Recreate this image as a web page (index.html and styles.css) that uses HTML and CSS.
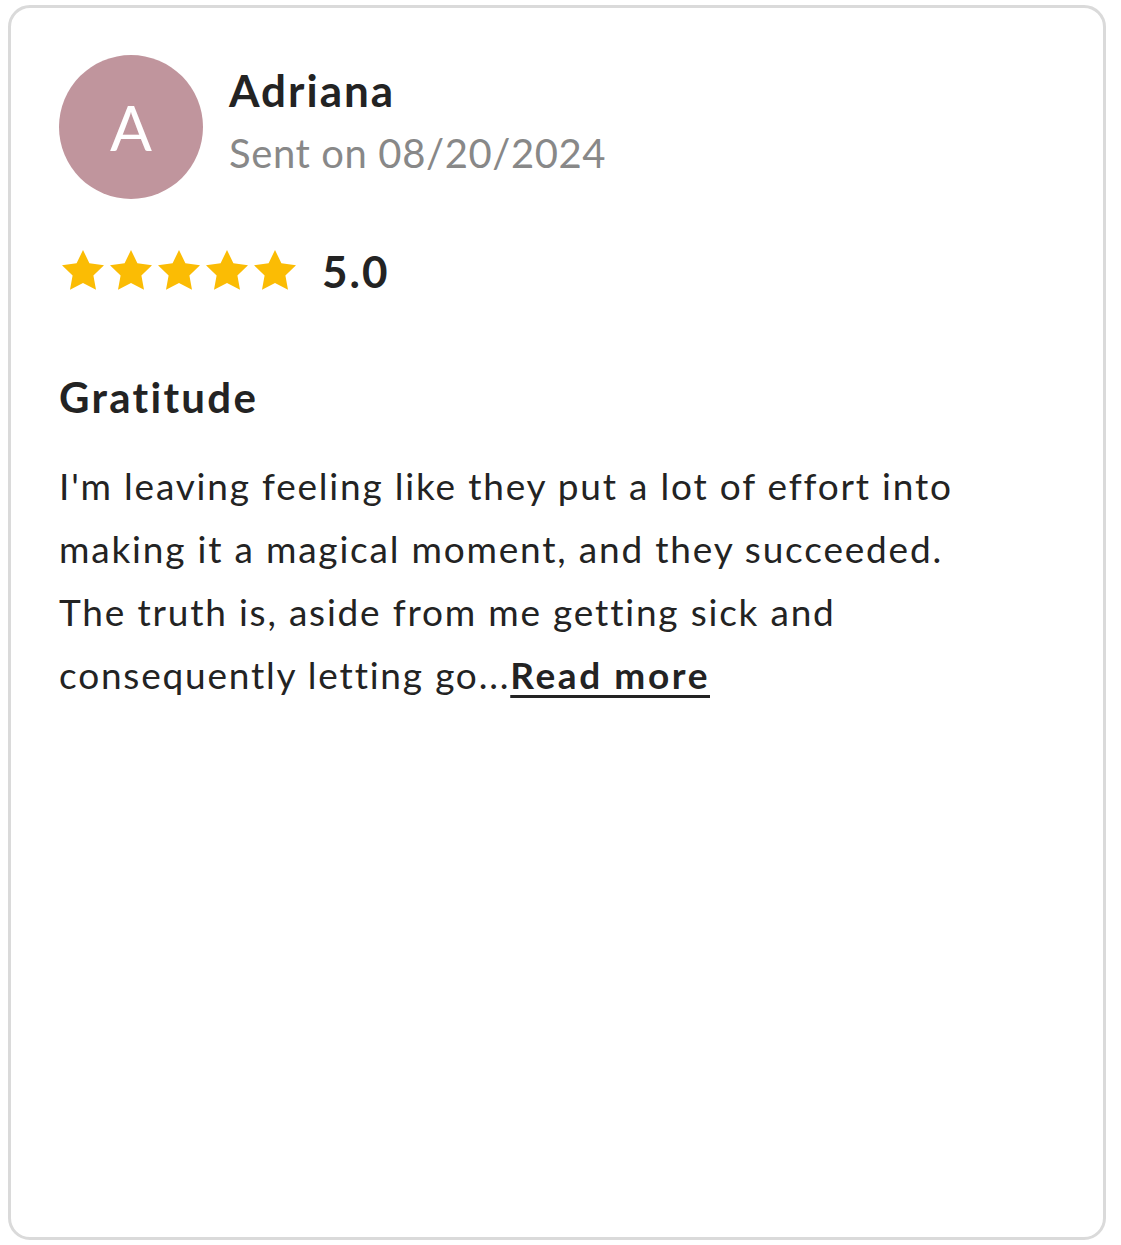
FILE: index.html
```html
<!DOCTYPE html>
<html lang="en">
<head>
    <meta charset="UTF-8">
    <title>Review</title>
    <link rel="stylesheet" href="styles.css">
</head>
<body>
<div class="review-card">
    <div class="review-header">
        <div class="avatar">A</div>
        <div class="author">
            <div class="author-name">Adriana</div>
            <div class="author-date">Sent on 08/20/2024</div>
        </div>
    </div>

    <div class="rating">
        <div class="stars">
            <svg viewBox="0 0 24 24"><path d="M12 1.5l3.2 6.6 7.3 1-5.3 5.1 1.3 7.2L12 18l-6.5 3.4 1.3-7.2L1.5 9.1l7.3-1z"/></svg>
            <svg viewBox="0 0 24 24"><path d="M12 1.5l3.2 6.6 7.3 1-5.3 5.1 1.3 7.2L12 18l-6.5 3.4 1.3-7.2L1.5 9.1l7.3-1z"/></svg>
            <svg viewBox="0 0 24 24"><path d="M12 1.5l3.2 6.6 7.3 1-5.3 5.1 1.3 7.2L12 18l-6.5 3.4 1.3-7.2L1.5 9.1l7.3-1z"/></svg>
            <svg viewBox="0 0 24 24"><path d="M12 1.5l3.2 6.6 7.3 1-5.3 5.1 1.3 7.2L12 18l-6.5 3.4 1.3-7.2L1.5 9.1l7.3-1z"/></svg>
            <svg viewBox="0 0 24 24"><path d="M12 1.5l3.2 6.6 7.3 1-5.3 5.1 1.3 7.2L12 18l-6.5 3.4 1.3-7.2L1.5 9.1l7.3-1z"/></svg>
        </div>
        <span class="rating-value">5.0</span>
    </div>

    <h2 class="review-title">Gratitude</h2>
    <p class="review-text">
        I'm leaving feeling like they put a lot of effort into making it a magical moment, and they succeeded. The truth is, aside from me getting sick and consequently letting go...<a href="#" class="read-more">Read more</a>
    </p>
</div>
</body>
</html>
```

FILE: styles.css
```css
:root {
    --text-main: #232323;
    --text-muted: #888;
    --border: #dadada;
    --avatar-bg: #c0959d;
    --star: #fbbc04;
}

* {
    margin: 0;
    padding: 0;
    box-sizing: border-box;
}

body {
    font-family: Lato, "Noto Sans", sans-serif;
    font-variant-ligatures: none;
    color: var(--text-main);
    background: #fff;
    padding: 5px 15px 5px 8px;
}

.review-card {
    height: 1235px;
    border: 3px solid var(--border);
    border-radius: 22px;
    padding: 47px 48px;
}

.review-header {
    display: flex;
    align-items: center;
    gap: 26px;
}

.avatar {
    width: 144px;
    height: 144px;
    border-radius: 50%;
    background: var(--avatar-bg);
    color: #fff;
    font-size: 62px;
    font-weight: 400;
    display: flex;
    align-items: center;
    justify-content: center;
    flex-shrink: 0;
}

.author {
    display: flex;
    flex-direction: column;
    gap: 13px;
    margin-top: -13px;
}

.author-name {
    font-size: 44px;
    font-weight: 700;
    letter-spacing: 2px;
}

.author-date {
    font-size: 40px;
    color: var(--text-muted);
    letter-spacing: 0.6px;
}

.rating {
    display: flex;
    align-items: center;
    gap: 23px;
    margin-top: 48px;
}

.stars {
    display: flex;
}

.stars svg {
    width: 48px;
    height: 48px;
    fill: var(--star);
}

.rating-value {
    font-size: 44px;
    font-weight: 700;
    line-height: 1;
    letter-spacing: 2px;
}

.review-title {
    font-size: 42px;
    font-weight: 700;
    letter-spacing: 2.3px;
    margin-top: 77px;
}

.review-text {
    max-width: 940px;
    font-size: 37px;
    line-height: 63px;
    letter-spacing: 1.8px;
    margin-top: 32px;
}

.read-more {
    color: var(--text-main);
    font-weight: 700;
    letter-spacing: 2.6px;
    text-underline-offset: 6px;
}
```
